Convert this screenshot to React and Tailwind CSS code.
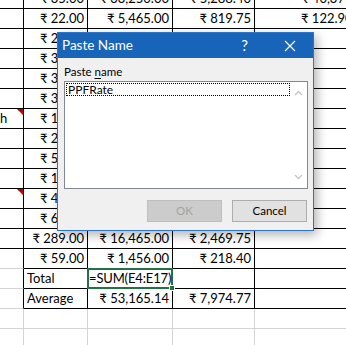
const upper = [
  ['', '₹ 35.00', '₹ 33,250.00', '₹ 5,288.40', '₹ 40,379.40'],
  ['', '₹ 22.00', '₹ 5,465.00', '₹ 819.75', '₹ 122.90'],
  ['', '₹ 24.00', '', '', ''],
  ['', '₹ 31.00', '', '', ''],
  ['', '₹ 35.00', '', '', ''],
  ['', '₹ 39.00', '', '', ''],
  ['h', '₹ 15.00', '', '', ''],
  ['', '₹ 21.00', '', '', ''],
  ['', '₹ 52.00', '', '', ''],
  ['', '₹ 17.00', '', '', ''],
  ['', '₹ 41.00', '', '', ''],
  ['', '₹ 65.00', '', '', ''],
  ['', '₹ 289.00', '₹ 16,465.00', '₹ 2,469.75', ''],
];

const lower = [
  ['', '₹ 59.00', '₹ 1,456.00', '₹ 218.40', ''],
  ['', 'Total', '=SUM(E4:E17)', '', ''],
  ['', 'Average', '₹ 53,165.14', '₹ 7,974.77', ''],
];

function Cell({ text, dark, darkRight, align = 'right', note, selected, pad }) {
  const border = dark ? 'border-b-black' : 'border-b-[#d4d4d4]';
  const right = darkRight ? 'border-r-black' : 'border-r-[#d4d4d4]';
  const justify = align === 'right' ? 'justify-end pr-[3px]' : 'justify-start pl-[3px]';
  return (
    <div
      className={`relative h-5 flex items-end pb-[2px] border-r border-b whitespace-nowrap ${border} ${right} ${pad || justify}`}
    >
      <span className="relative z-20 leading-[16px]">{text}</span>
      {note && (
        <div className="absolute top-0 right-0 w-0 h-0 border-t-[6px] border-t-[#c00000] border-l-[6px] border-l-transparent" />
      )}
      {selected && (
        <div className="absolute z-10 -top-px -left-px -right-px -bottom-px border-2 border-[#217346]">
          <div className="absolute -right-[4px] -bottom-[4px] w-[6px] h-[6px] bg-[#217346] border border-white" />
        </div>
      )}
    </div>
  );
}

function Sheet() {
  return (
    <div className="-mt-[11px] grid grid-cols-[24px_64px_85px_82px_1fr] text-[13px] text-black [font-family:Lato,'Noto_Sans',sans-serif]">
      {upper.map((r, i) => (
        <div key={i} className="contents">
          <Cell text={r[0]} dark darkRight pad="justify-start pl-0" note={i === 6 || i === 10} />
          <Cell text={r[1]} dark darkRight />
          <Cell text={r[2]} dark darkRight />
          <Cell text={r[3]} dark darkRight />
          <Cell text={r[4]} dark pad="justify-start pl-[46px]" />
        </div>
      ))}
      {lower.map((r, i) => (
        <div key={'l' + i} className="contents">
          <Cell text="" darkRight />
          <Cell text={r[1]} dark darkRight align={i === 0 ? 'right' : 'left'} />
          <Cell
            text={r[2]}
            dark
            darkRight
            pad={i === 1 ? 'justify-start pl-px tracking-[-0.15px]' : undefined}
            selected={i === 1}
          />
          <Cell text={r[3]} dark darkRight />
          <Cell text="" dark />
        </div>
      ))}
      {[0, 1].map((i) => (
        <div key={'e' + i} className="contents">
          <Cell text="" />
          <Cell text="" />
          <Cell text="" />
          <Cell text="" />
          <Cell text="" />
        </div>
      ))}
    </div>
  );
}

function PasteNameDialog() {
  return (
    <div className="absolute z-30 left-[57px] top-[32px] w-[257px] h-[199px] border border-[#2c74c6] bg-[#f0f0f0] shadow-[3px_4px_10px_rgba(0,0,0,0.3)] flex flex-col [font-family:Lato,'Noto_Sans',sans-serif]">
      <div className="h-[25px] bg-[#1764b9] flex items-center text-white">
        <span className="pl-[4px] text-[13.5px] leading-none">Paste Name</span>
        <span className="ml-auto mr-[36px] text-[15px] leading-none">?</span>
        <svg width="12" height="12" viewBox="0 0 12 12" className="mr-[17px]">
          <path d="M1 1 L11 11 M11 1 L1 11" stroke="white" strokeWidth="1.2" />
        </svg>
      </div>
      <div className="flex-1 px-[6px] pt-[6px] text-[11.5px] text-black">
        <div className="h-[16px] leading-[16px]">
          Paste <span className="underline underline-offset-2">n</span>ame
        </div>
        <div className="mt-px w-[244px] h-[108px] border border-[#828790] bg-white flex">
          <div className="flex-1 pt-px pl-px">
            <div className="h-[13px] border border-dotted border-black flex items-center pl-px leading-none text-[12px]">
              PPFRate
            </div>
          </div>
          <div className="w-[17px] flex flex-col items-center justify-between py-[8px]">
            <svg width="9" height="6" viewBox="0 0 9 6">
              <path d="M1 5 L4.5 1.5 L8 5" fill="none" stroke="#c4c4c4" strokeWidth="1.3" />
            </svg>
            <svg width="9" height="6" viewBox="0 0 9 6">
              <path d="M1 1 L4.5 4.5 L8 1" fill="none" stroke="#c4c4c4" strokeWidth="1.3" />
            </svg>
          </div>
        </div>
        <div className="mt-[11px] flex justify-end gap-[10px]">
          <div className="w-[75px] h-[22px] border border-[#bfbfbf] bg-[#cccccc] text-[#a3a3a3] flex items-center justify-center">
            OK
          </div>
          <div className="w-[75px] h-[22px] border border-[#adadad] bg-[#e1e1e1] flex items-center justify-center">
            Cancel
          </div>
        </div>
      </div>
    </div>
  );
}

export default function App() {
  return (
    <div className="relative w-[346px] h-[345px] overflow-hidden bg-white">
      <Sheet />
      <PasteNameDialog />
    </div>
  );
}
